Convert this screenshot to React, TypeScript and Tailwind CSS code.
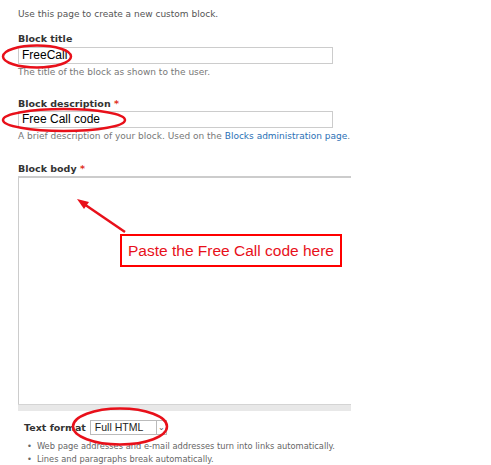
export default function App() {
  return (
    <div className="relative w-[491px] h-[465px] overflow-hidden bg-white pl-[18px] pt-[8px] text-[#555] text-[9px] leading-[12px] font-['DejaVu_Sans',sans-serif]">
      <p>Use this page to create a new custom block.</p>

      <div className="mt-[13px] font-bold text-[9.5px] text-[#333]">Block title</div>
      <div className="mt-[2px] w-[315px] h-[17px] border border-[#ccc] pl-[3px] text-[12px] leading-[15px] text-black font-['Liberation_Sans',sans-serif]">
        FreeCall
      </div>
      <p className="mt-[2px] text-[#777]">The title of the block as shown to the user.</p>

      <div className="mt-[20px] font-bold text-[9.5px] text-[#333]">
        Block description <span className="text-[#e0301e]">*</span>
      </div>
      <div className="mt-[1px] w-[315px] h-[17px] border border-[#ccc] pl-[3px] text-[12px] leading-[15px] text-black font-['Liberation_Sans',sans-serif]">
        Free Call code
      </div>
      <p className="mt-[2px] text-[#777] whitespace-nowrap">
        A brief description of your block. Used on the <span className="text-[#2a6fb5]">Blocks administration page</span>.
      </p>

      <div className="mt-[21px] font-bold text-[9.5px] text-[#333]">
        Block body <span className="text-[#e0301e]">*</span>
      </div>
      <div className="mt-[1px] w-[333px]">
        <div className="h-[228px] border-l border-t-2 border-[#ccc]"></div>
        <div className="h-[7px] bg-[#e8e8e8] border-t border-[#d4d4d4]"></div>
      </div>

      <div className="mt-[9px] pl-[6px] flex items-center gap-[4px]">
        <span className="font-bold text-[9.5px] text-[#333]">Text format</span>
        <div className="flex h-[15px] w-[77px] border border-[#bbb] text-[10.5px] leading-[13px] text-[#222] font-['Liberation_Sans',sans-serif]">
          <span className="flex-1 pl-[4px]">Full HTML</span>
          <span className="w-[10px] border-l border-[#bbb] flex items-center justify-center text-[8px] text-[#555]">⌄</span>
        </div>
      </div>
      <ul className="mt-[5px] pl-[9px] text-[#666] text-[8.3px] leading-[13px]">
        <li className="flex gap-[5px]"><span>•</span>Web page addresses and e-mail addresses turn into links automatically.</li>
        <li className="flex gap-[5px]"><span>•</span>Lines and paragraphs break automatically.</li>
      </ul>

      {/* annotations */}
      <svg className="absolute left-0 top-0" width="491" height="465">
        <ellipse cx="37" cy="56.5" rx="34" ry="11" fill="none" stroke="#e8101a" strokeWidth="2.5" />
        <ellipse cx="64" cy="120" rx="61" ry="11" fill="none" stroke="#e8101a" strokeWidth="2.5" />
        <ellipse cx="120" cy="426.5" rx="47" ry="18" fill="none" stroke="#e8101a" strokeWidth="2.5" />
        <line x1="125" y1="232" x2="84" y2="204" stroke="#e8101a" strokeWidth="2.5" />
        <polygon points="77,199 89,202 84,209" fill="#e8101a" />
      </svg>
      <div className="absolute left-[120px] top-[234px] w-[222px] h-[33px] border-[2.5px] border-[#f00] bg-white flex items-center justify-center text-[15.5px] text-[#e8101a] font-['Liberation_Sans',sans-serif]">
        Paste the Free Call code here
      </div>
    </div>
  );
}
